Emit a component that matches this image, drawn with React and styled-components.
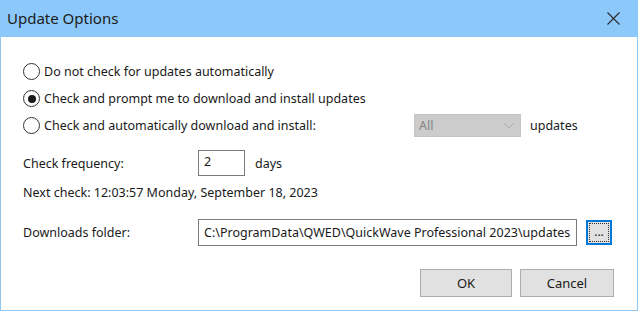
import React from 'react'
import styled, { createGlobalStyle } from 'styled-components'

const GlobalStyle = createGlobalStyle`
  html, body {
    margin: 0;
    padding: 0;
    background: #fff;
  }
  body {
    font-family: "Noto Sans", "Liberation Sans", sans-serif;
    font-size: 12.5px;
    color: #1a1a1a;
  }
`

const Window = styled.div`
  width: 638px;
  height: 311px;
  box-sizing: border-box;
  border: 1px solid #8fc7f5;
  border-top: none;
  display: flex;
  flex-direction: column;
  background: #fff;
`

const TitleBar = styled.div`
  height: 37px;
  flex: none;
  background: #8cc8f9;
  display: flex;
  align-items: center;
  justify-content: space-between;
  padding: 0 0 0 7px;
  margin: 0 -1px;
`

const Title = styled.span`
  font-size: 15px;
  color: #1b1b1b;
  padding-bottom: 1px;
`

const CloseButton = styled.div`
  width: 46px;
  height: 37px;
  display: flex;
  align-items: center;
  justify-content: center;
  margin-right: 2px;
`

const Body = styled.div`
  flex: 1;
  display: flex;
  flex-direction: column;
  padding: 21px 23px 0 22px;
`

const RadioRow = styled.label`
  height: 27px;
  display: flex;
  align-items: center;
`

const RadioCircle = styled.span`
  width: 17px;
  height: 17px;
  box-sizing: border-box;
  border: 1px solid #333;
  border-radius: 50%;
  display: flex;
  align-items: center;
  justify-content: center;
  margin-right: 4px;
  flex: none;

  &::after {
    content: '';
    width: 8px;
    height: 8px;
    border-radius: 50%;
    background: #1a1a1a;
    display: ${({ checked }) => (checked ? 'block' : 'none')};
  }
`

const RadioText = styled.span`
  width: 370px;
`

const Select = styled.div`
  width: 107px;
  height: 23px;
  box-sizing: border-box;
  background: #cccccc;
  border: 1px solid #c4c4c4;
  display: flex;
  align-items: center;
  justify-content: space-between;
  padding: 0 6px 0 4px;
  color: #838383;
`

const Trailing = styled.span`
  margin-left: ${({ gap }) => gap}px;
`

const FieldRow = styled.div`
  display: flex;
  align-items: center;
  height: ${({ h }) => h}px;
  margin-top: ${({ mt }) => mt}px;
`

const Label = styled.span`
  width: 175px;
  flex: none;
`

const TextBox = styled.div`
  width: ${({ w }) => w}px;
  height: ${({ h }) => h}px;
  box-sizing: border-box;
  border: 1px solid #7a7a7a;
  background: #fff;
  padding: ${({ pt }) => pt}px 0 0 5px;
  white-space: nowrap;
  overflow: hidden;
`

const Browse = styled.div`
  width: 26px;
  height: 25px;
  box-sizing: border-box;
  margin-left: 9px;
  border: 2px solid #0078d7;
  background: #e1e1e1;
  position: relative;
  display: flex;
  align-items: flex-end;
  justify-content: center;
  padding-bottom: 5px;
  line-height: 1;
  font-size: 12px;

  &::before {
    content: '';
    position: absolute;
    inset: 1px;
    border: 1px dotted #333;
  }
`

const ButtonRow = styled.div`
  display: flex;
  justify-content: flex-end;
  gap: 8px;
  margin-top: 23px;
`

const Button = styled.div`
  width: ${({ w }) => w}px;
  height: 28px;
  box-sizing: border-box;
  background: #e1e1e1;
  border: 1px solid #adadad;
  display: flex;
  align-items: center;
  justify-content: center;
  font-size: 13px;
`

const Chevron = () => (
  <svg width="10" height="6" viewBox="0 0 10 6">
    <path d="M0.5 0.5 L5 5 L9.5 0.5" fill="none" stroke="#a8a8a8" strokeWidth="1" />
  </svg>
)

export default function App() {
  return (
    <>
      <GlobalStyle />
      <Window>
        <TitleBar>
          <Title>Update Options</Title>
          <CloseButton>
            <svg width="13" height="13" viewBox="0 0 13 13">
              <path d="M0.5 0.5 L12.5 12.5 M12.5 0.5 L0.5 12.5" stroke="#2b2b2b" strokeWidth="1.1" />
            </svg>
          </CloseButton>
        </TitleBar>
        <Body>
          <RadioRow>
            <RadioCircle />
            <RadioText>Do not check for updates automatically</RadioText>
          </RadioRow>
          <RadioRow>
            <RadioCircle checked />
            <RadioText>Check and prompt me to download and install updates</RadioText>
          </RadioRow>
          <RadioRow>
            <RadioCircle />
            <RadioText>Check and automatically download and install:</RadioText>
            <Select>
              <span>All</span>
              <Chevron />
            </Select>
            <Trailing gap={9}>updates</Trailing>
          </RadioRow>
          <FieldRow h={26} mt={11}>
            <Label>Check frequency:</Label>
            <TextBox w={47} h={26} pt={2}>2</TextBox>
            <Trailing gap={10}>days</Trailing>
          </FieldRow>
          <FieldRow h={20} mt={6}>
            <span>Next check: 12:03:57 Monday, September 18, 2023</span>
          </FieldRow>
          <FieldRow h={27} mt={17}>
            <Label>Downloads folder:</Label>
            <TextBox w={379} h={27} pt={4}>
              C:\ProgramData\QWED\QuickWave Professional 2023\updates
            </TextBox>
            <Browse>...</Browse>
          </FieldRow>
          <ButtonRow>
            <Button w={92}>OK</Button>
            <Button w={94}>Cancel</Button>
          </ButtonRow>
        </Body>
      </Window>
    </>
  )
}
